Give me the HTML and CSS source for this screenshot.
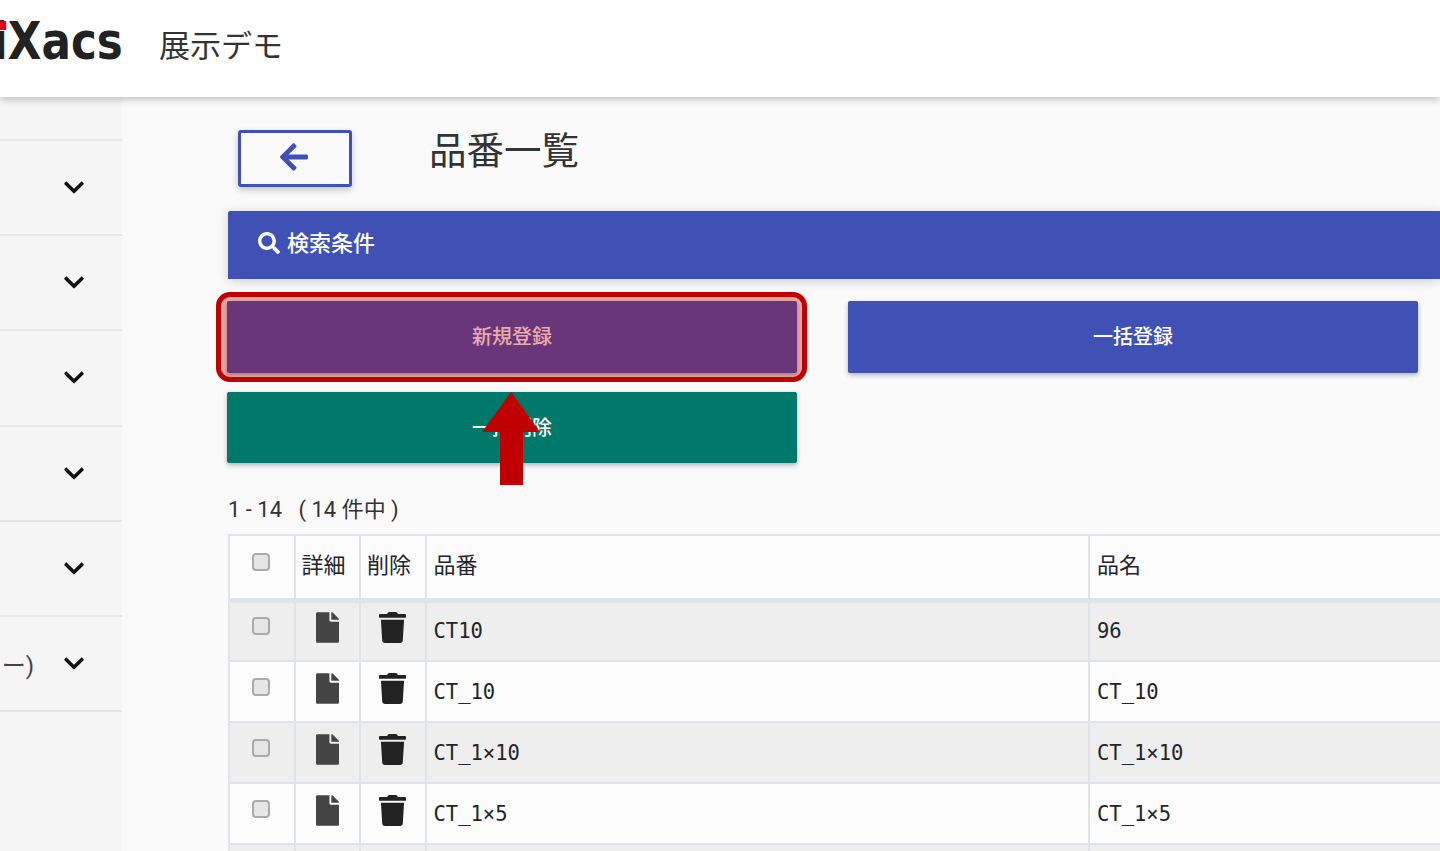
FILE: index.html
```html
<!DOCTYPE html>
<html lang="ja">
<head>
    <meta charset="UTF-8">
    <meta name="viewport" content="width=device-width, initial-scale=1.0">
    <title>品番一覧</title>
    <link rel="stylesheet" href="styles.css">
</head>
<body>

    <svg class="icon-defs" aria-hidden="true">
        <symbol id="i-chevron" viewBox="0 0 448 512"><path d="M207.029 381.476L12.686 187.132c-9.373-9.373-9.373-24.569 0-33.941l22.667-22.667c9.357-9.357 24.522-9.375 33.901-.04L224 284.505l154.745-154.021c9.379-9.335 24.544-9.317 33.901.04l22.667 22.667c9.373 9.373 9.373 24.569 0 33.941L240.971 381.476c-9.373 9.372-24.569 9.372-33.942 0z"/></symbol>
        <symbol id="i-file" viewBox="0 0 384 512"><path d="M224 136V0H24C10.7 0 0 10.7 0 24v464c0 13.3 10.7 24 24 24h336c13.3 0 24-10.7 24-24V160H248c-13.2 0-24-10.8-24-24zm160-14.1v6.1H256V0h6.1c6.4 0 12.5 2.5 17 7l97.9 98c4.5 4.5 7 10.6 7 16.9z"/></symbol>
        <symbol id="i-trash" viewBox="0 0 448 512"><path d="M432 32H312l-9.4-18.7A24 24 0 0 0 281.1 0H166.8a23.72 23.72 0 0 0-21.4 13.3L136 32H16A16 16 0 0 0 0 48v32a16 16 0 0 0 16 16h416a16 16 0 0 0 16-16V48a16 16 0 0 0-16-16zM53.2 467a48 48 0 0 0 47.9 45h245.8a48 48 0 0 0 47.9-45L416 128H32z"/></symbol>
    </svg>

    <header class="topbar">
        <div class="logo"><div class="logo-text"><span class="logo-i">i</span>Xacs</div></div>
        <div class="site-name">展示デモ</div>
    </header>

    <div class="layout">
        <aside class="sidebar">
            <div class="side-first"></div>
            <div class="side-item"><svg class="chevron"><use href="#i-chevron"/></svg></div>
            <div class="side-item"><svg class="chevron"><use href="#i-chevron"/></svg></div>
            <div class="side-item"><svg class="chevron"><use href="#i-chevron"/></svg></div>
            <div class="side-item"><svg class="chevron"><use href="#i-chevron"/></svg></div>
            <div class="side-item"><svg class="chevron"><use href="#i-chevron"/></svg></div>
            <div class="side-item"><span class="side-label">ー)</span><svg class="chevron"><use href="#i-chevron"/></svg></div>
        </aside>

        <main class="content">
            <div class="title-row">
                <button class="back-button">
                    <svg class="back-icon" viewBox="0 0 448 512"><path d="M257.5 445.1l-22.2 22.2c-9.4 9.4-24.6 9.4-33.9 0L7 273c-9.4-9.4-9.4-24.6 0-33.9L201.4 44.7c9.4-9.4 24.6-9.4 33.9 0l22.2 22.2c9.5 9.5 9.3 25-.4 34.3L136.6 216H424c13.3 0 24 10.7 24 24v32c0 13.3-10.7 24-24 24H136.6l120.5 114.8c9.8 9.3 10 24.8.4 34.3z"/></svg>
                </button>
                <h1 class="page-title">品番一覧</h1>
            </div>

            <div class="search-bar">
                <svg class="search-icon" viewBox="0 0 512 512"><path d="M505 442.7L405.3 343c-4.5-4.5-10.6-7-17-7H372c27.6-35.3 44-79.7 44-128C416 93.1 322.9 0 208 0S0 93.1 0 208s93.1 208 208 208c48.3 0 92.7-16.4 128-44v16.3c0 6.4 2.5 12.5 7 17l99.7 99.7c9.4 9.4 24.6 9.4 33.9 0l28.3-28.3c9.4-9.4 9.4-24.6.1-34zM208 336c-70.7 0-128-57.2-128-128 0-70.7 57.2-128 128-128 70.7 0 128 57.2 128 128 0 70.7-57.2 128-128 128z"/></svg>
                <span class="search-label">検索条件</span>
            </div>

            <div class="actions">
                <button class="action-button action-blue">新規登録<span class="highlight"></span></button>
                <button class="action-button action-blue">一括登録</button>
                <button class="action-button action-green">一括削除
                    <svg class="red-arrow" viewBox="0 0 58 93"><path d="M29 0L58 40H41V93H18V40H0z"/></svg>
                </button>
            </div>

            <p class="result-count">1 - 14 &nbsp;&nbsp;( 14 件中 )</p>

            <table class="item-table">
                <thead>
                    <tr>
                        <th class="col-check"><input type="checkbox" class="row-check"></th>
                        <th class="col-icon">詳細</th>
                        <th class="col-icon">削除</th>
                        <th class="col-code">品番</th>
                        <th class="col-name">品名</th>
                    </tr>
                </thead>
                <tbody>
                    <tr>
                        <td class="cell-check"><input type="checkbox" class="row-check"></td>
                        <td class="cell-icon"><svg class="file-icon"><use href="#i-file"/></svg></td>
                        <td class="cell-icon"><svg class="trash-icon"><use href="#i-trash"/></svg></td>
                        <td>CT10</td>
                        <td>96</td>
                    </tr>
                    <tr>
                        <td class="cell-check"><input type="checkbox" class="row-check"></td>
                        <td class="cell-icon"><svg class="file-icon"><use href="#i-file"/></svg></td>
                        <td class="cell-icon"><svg class="trash-icon"><use href="#i-trash"/></svg></td>
                        <td>CT_10</td>
                        <td>CT_10</td>
                    </tr>
                    <tr>
                        <td class="cell-check"><input type="checkbox" class="row-check"></td>
                        <td class="cell-icon"><svg class="file-icon"><use href="#i-file"/></svg></td>
                        <td class="cell-icon"><svg class="trash-icon"><use href="#i-trash"/></svg></td>
                        <td>CT_1×10</td>
                        <td>CT_1×10</td>
                    </tr>
                    <tr>
                        <td class="cell-check"><input type="checkbox" class="row-check"></td>
                        <td class="cell-icon"><svg class="file-icon"><use href="#i-file"/></svg></td>
                        <td class="cell-icon"><svg class="trash-icon"><use href="#i-trash"/></svg></td>
                        <td>CT_1×5</td>
                        <td>CT_1×5</td>
                    </tr>
                    <tr>
                        <td class="cell-check"></td>
                        <td class="cell-icon"></td>
                        <td class="cell-icon"></td>
                        <td></td>
                        <td></td>
                    </tr>
                </tbody>
            </table>
        </main>
    </div>

</body>
</html>
```

FILE: styles.css
```css
* {
    box-sizing: border-box;
}

html,
body {
    height: 100%;
}

body {
    margin: 0;
    overflow: hidden;
    display: flex;
    flex-direction: column;
    background-color: #fafafa;
    color: #212529;
    font-family: Roboto, "Noto Sans CJK JP", sans-serif;
}

.icon-defs {
    display: none;
}

/* top bar */
.topbar {
    height: 97px;
    flex: none;
    display: flex;
    align-items: center;
    background-color: #fff;
    box-shadow: 0 2px 8px rgba(0, 0, 0, 0.25);
    position: relative;
    z-index: 2;
}

.logo {
    width: 123px;
    flex: none;
    overflow: hidden;
    display: flex;
    justify-content: flex-end;
    margin-bottom: 16px;
}

.logo-text {
    flex: none;
    font-family: "DejaVu Sans", sans-serif;
    font-weight: bold;
    font-size: 52px;
    line-height: 60px;
    color: #222;
    white-space: nowrap;
    transform: scaleX(0.84);
    transform-origin: right center;
}

.logo-i {
    position: relative;
}

/* red dot of the i */
.logo-i::before {
    content: "";
    position: absolute;
    top: 10px;
    left: 2px;
    width: 14px;
    height: 9px;
    background-color: #e60012;
}

.site-name {
    margin: 0 0 10px 36px;
    font-size: 31px;
    color: #333;
}

/* sidebar */
.layout {
    flex: 1;
    display: flex;
    min-height: 0;
}

.sidebar {
    width: 122px;
    flex: none;
    background-color: #f5f5f5;
}

.side-first {
    height: 44px;
    border-bottom: 2px solid #e6e6e6;
}

.side-item {
    height: 95.2px;
    display: flex;
    align-items: center;
    justify-content: flex-end;
    padding-right: 38px;
    border-bottom: 2px solid #e6e6e6;
}

.side-label {
    margin-right: 30px;
    font-size: 24px;
    color: #444;
    white-space: nowrap;
}

.chevron {
    width: 20px;
    height: 23px;
    fill: #111;
}

/* main area */
.content {
    flex: 1;
    min-width: 0;
    padding: 33px 0 0 106px;
}

.title-row {
    display: flex;
    align-items: center;
    height: 56px;
    padding-left: 10px;
}

.back-button {
    width: 114px;
    height: 57px;
    padding: 0 2px 2px 0;
    display: flex;
    align-items: center;
    justify-content: center;
    background-color: #fafafa;
    border: 3px solid #3f51b5;
    border-radius: 3px;
    box-shadow: 0 3px 7px rgba(0, 0, 0, 0.22);
}

.back-icon {
    width: 28px;
    height: 32px;
    fill: #3f51b5;
}

.page-title {
    margin: -22px 0 0 77px;
    font-size: 37.5px;
    font-weight: normal;
    color: #333;
}

.search-bar {
    height: 68px;
    margin-top: 25px;
    display: flex;
    align-items: center;
    gap: 7px;
    padding: 0 0 4px 30px;
    background-color: #3f51b5;
    color: #fff;
    font-size: 22px;
    font-weight: 500;
    border-radius: 2px 0 0 0;
    box-shadow: 0 2px 12px rgba(0, 0, 0, 0.18);
}

.search-icon {
    width: 22px;
    height: 22px;
    fill: #fff;
}

.search-label {
    margin-top: -4px;
}

.actions {
    display: grid;
    grid-template-columns: 570px 570px;
    grid-template-rows: 72px 71px;
    column-gap: 51px;
    row-gap: 19px;
    margin: 22px 0 0 -1px;
}

.action-button {
    position: relative;
    padding: 0 0 4px;
    border: none;
    border-radius: 2px;
    color: #fff;
    font-family: inherit;
    font-size: 20px;
    font-weight: 500;
    box-shadow: 0 2px 5px rgba(0, 0, 0, 0.3);
}

.action-blue {
    background-color: #3f51b5;
}

.action-green {
    padding-bottom: 3px;
    background-color: #00796b;
}

/* red annotation round the first button */
.highlight {
    position: absolute;
    top: -9px;
    left: -11px;
    right: -10px;
    bottom: -9px;
    border: 5px solid #c00000;
    border-radius: 14px;
    background-color: rgba(192, 0, 0, 0.33);
}

.red-arrow {
    position: absolute;
    top: 0;
    left: 255px;
    width: 58px;
    height: 93px;
    fill: #c00000;
}

.result-count {
    margin: 33px 0 10px;
    font-size: 22px;
    line-height: 28px;
    color: #333;
}

/* table */
.item-table {
    width: 1400px;
    table-layout: fixed;
    border-collapse: collapse;
    background-color: #fcfcfc;
}

.item-table th,
.item-table td {
    border: 2px solid #e0e3e8;
    padding: 0 7px;
    text-align: left;
    vertical-align: middle;
}

.item-table th {
    height: 65px;
    padding-bottom: 8px;
    font-size: 22px;
    font-weight: normal;
    border-bottom-width: 5px;
}

.item-table td {
    height: 61px;
    font-family: "DejaVu Sans Mono", monospace;
    font-size: 20.5px;
}

.item-table tbody tr:nth-child(odd) {
    background-color: #eee;
}

.col-check {
    width: 65.5px;
}

.col-icon {
    width: 65.5px;
}

.col-code {
    width: 663.5px;
}

.item-table .cell-check,
.item-table .col-check,
.item-table .cell-icon {
    padding: 0;
    text-align: center;
}

.item-table .col-icon {
    padding-left: 6px;
}

.row-check {
    appearance: none;
    display: block;
    width: 18px;
    height: 18px;
    margin: -10px 0 0 22px;
    background-color: #e6e6e6;
    border: 2px solid #aaa;
    border-radius: 4px;
}

.file-icon,
.trash-icon {
    display: block;
    height: 31px;
    margin: -7px auto 0;
}

.file-icon {
    width: 23px;
    fill: #444;
}

.trash-icon {
    width: 27px;
    fill: #222;
}
```
